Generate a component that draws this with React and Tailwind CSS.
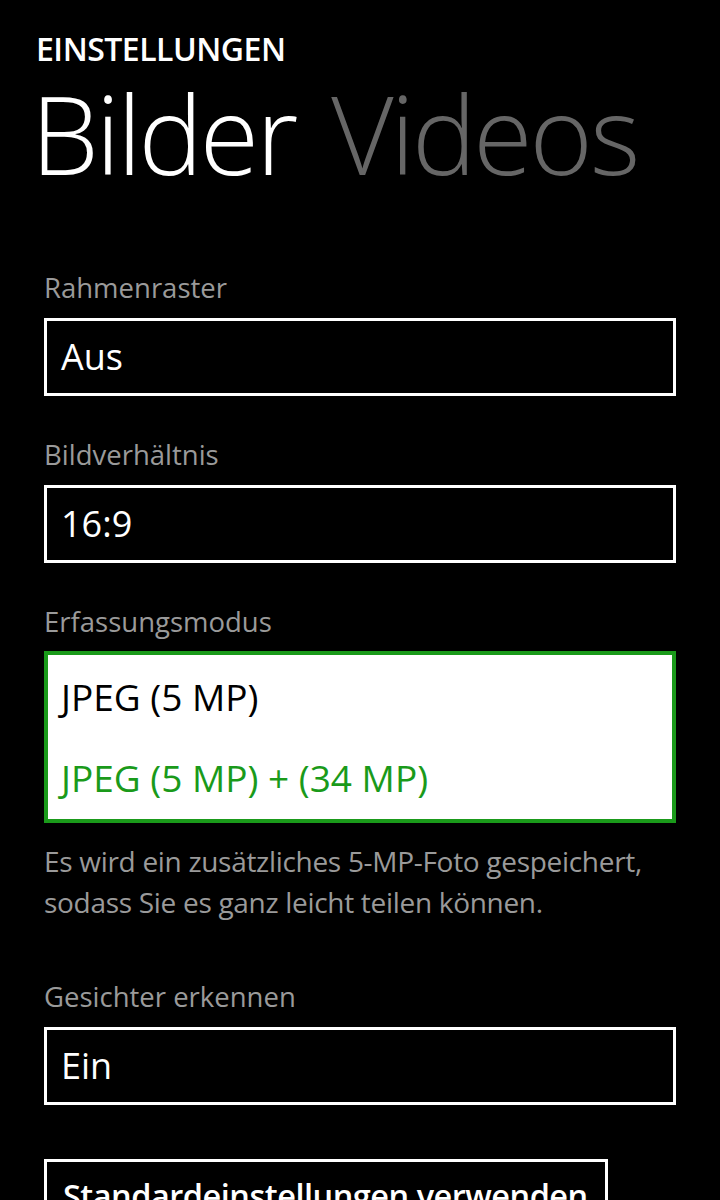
import { useState } from 'react'

const fieldBox = 'h-[78px] border-[3px] border-white flex items-center px-[14px] text-[36px] text-white'

function Field({ label, value }) {
    return (
        <div>
            <div className="text-[27.5px] leading-[34px] text-[#9a9a9a]">{label}</div>
            <div className={`mt-[13px] ${fieldBox}`}>{value}</div>
        </div>
    )
}

export default function App() {
    const [mode] = useState(1)
    const modes = ['JPEG (5 MP)', 'JPEG (5 MP) + (34 MP)']

    return (
        <div className="w-[720px] h-[1200px] overflow-hidden bg-black font-['Open_Sans',sans-serif]">
            <div className="pl-[36px] pt-[30px]">
                <div className="text-[32px] leading-[38px] font-semibold text-white tracking-[-0.5px]">EINSTELLUNGEN</div>
                <div className="-ml-[5px] mt-[10px] flex gap-[36px] text-[108px] leading-[112px] font-light tracking-[-3px]">
                    <span className="text-white">Bilder</span>
                    <span className="text-[#666666]">Videos</span>
                </div>
            </div>

            <div className="mt-[81px] pl-[44px] pr-[44px] flex flex-col">
                <Field label="Rahmenraster" value="Aus" />
                <div className="mt-[42px]">
                    <Field label="Bildverhältnis" value="16:9" />
                </div>

                <div className="mt-[42px]">
                    <div className="text-[27.5px] leading-[34px] text-[#9a9a9a]">Erfassungsmodus</div>
                    <div className="mt-[12px] h-[172px] border-[4px] border-[#1a9a1a] bg-white flex flex-col justify-center gap-[36px] px-[13px] text-[37px] leading-[45px]">
                        {modes.map((m, i) => (
                            <div key={m} className={i === mode ? 'text-[#1a9a1a]' : 'text-black'}>{m}</div>
                        ))}
                    </div>
                    <p className="mt-[18px] text-[28px] leading-[41px] text-[#9a9a9a] tracking-[-0.3px]">
                        Es wird ein zusätzliches 5-MP-Foto gespeichert,
                        <br />
                        sodass Sie es ganz leicht teilen können.
                    </p>
                </div>

                <div className="mt-[57px]">
                    <Field label="Gesichter erkennen" value="Ein" />
                </div>

                <div className="mt-[54px] w-[564px] h-[80px] border-[3px] border-white flex items-start pt-[14px] px-[16px]">
                    <span className="text-[32.5px] leading-[40px] font-semibold text-white tracking-[-0.5px] whitespace-nowrap">Standardeinstellungen verwenden</span>
                </div>
            </div>
        </div>
    )
}
